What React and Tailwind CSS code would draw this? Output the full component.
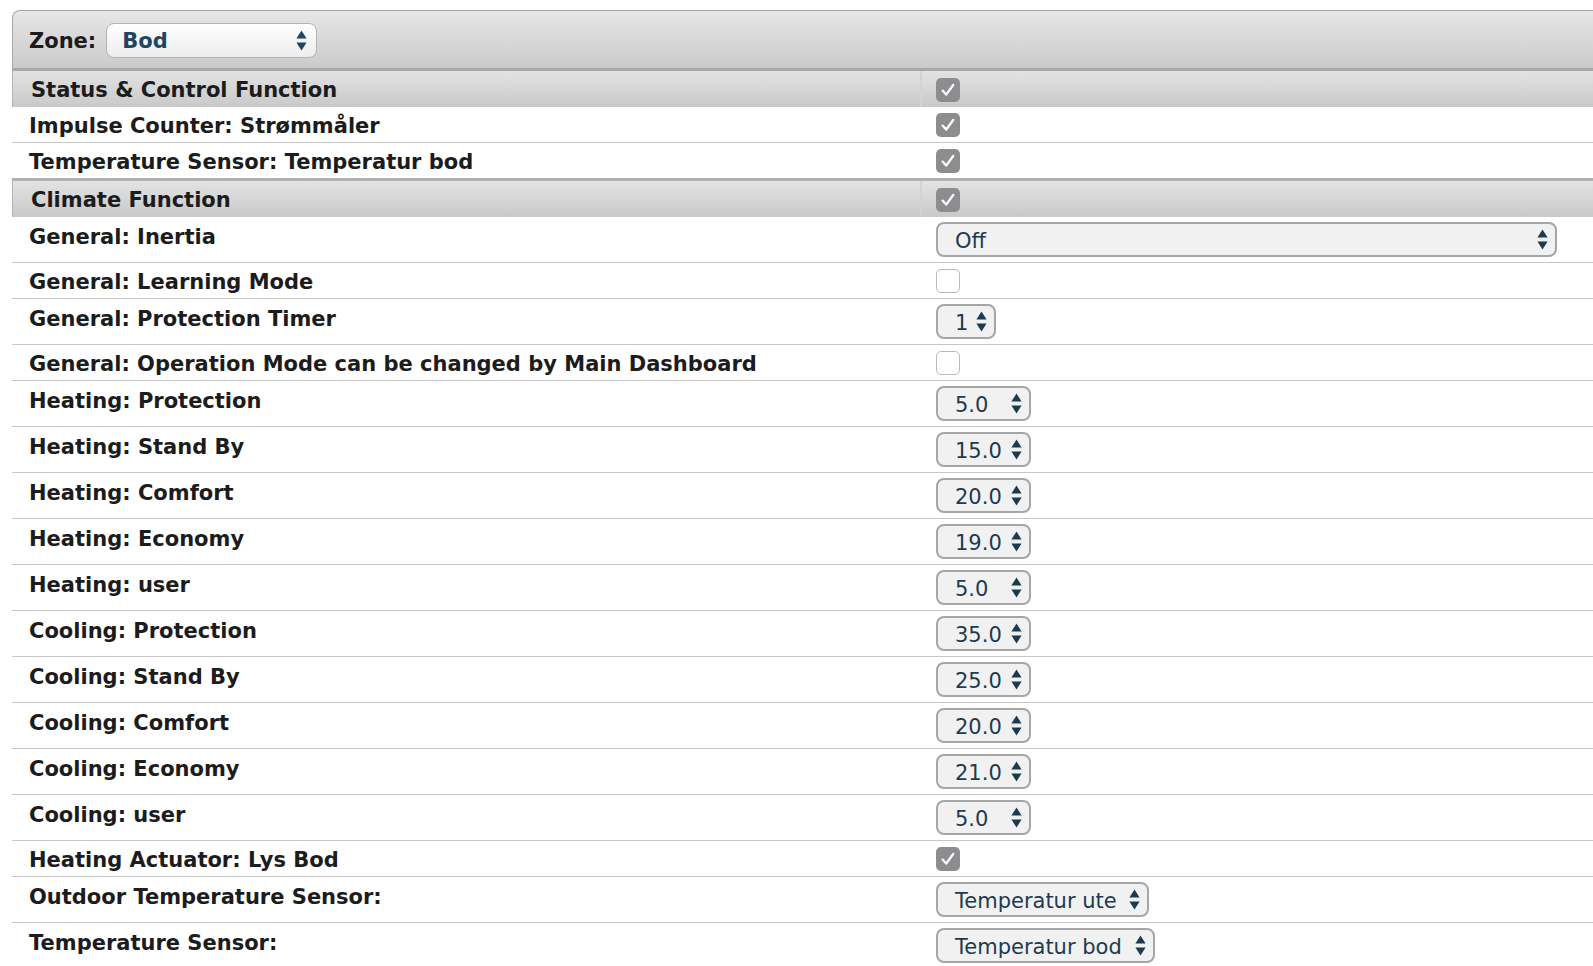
import React from "react";

const NAVY = "#1d3b50";

function Arrows({ color = NAVY }) {
  return (
    <svg width="11" height="21" viewBox="0 0 11 21" className="shrink-0">
      <path d="M5.5 0.5 L10.6 8.5 L0.4 8.5 Z" fill={color} />
      <path d="M0.4 12.5 L10.6 12.5 L5.5 20.5 Z" fill={color} />
    </svg>
  );
}

function Check({ checked }) {
  if (checked) {
    return (
      <div className="flex h-[24px] w-[24px] items-center justify-center rounded-[5px] bg-[#8d8d8f]">
        <svg width="18" height="18" viewBox="0 0 18 18">
          <path d="M3.6 9.6 L7.2 13.6 L14.2 4" fill="none" stroke="white" strokeWidth="2.3" strokeLinecap="round" strokeLinejoin="round" />
        </svg>
      </div>
    );
  }
  return <div className="h-[24px] w-[24px] rounded-[5px] border-[1.5px] border-[#b9b9b9] bg-white" />;
}

function Select({ value, w }) {
  return (
    <div className={`flex h-[35px] items-center justify-between rounded-[8px] border-2 border-[#a6a6a6] bg-[#f1f1f1] pl-[17px] pr-[7px] font-normal text-[#1d3b50] ${w}`}>
      <span className="pt-[3px] leading-none">{value}</span>
      <Arrows />
    </div>
  );
}

const rows = [
  { type: "header", label: "Status & Control Function", checked: true },
  { type: "check", label: "Impulse Counter: Strømmåler", checked: true },
  { type: "check", label: "Temperature Sensor: Temperatur bod", checked: true, last: true },
  { type: "header", label: "Climate Function", checked: true },
  { type: "select", label: "General: Inertia", value: "Off", w: "w-[621px]" },
  { type: "check", label: "General: Learning Mode", checked: false },
  { type: "select", label: "General: Protection Timer", value: "1", w: "w-[60px]" },
  { type: "check", label: "General: Operation Mode can be changed by Main Dashboard", checked: false },
  { type: "select", label: "Heating: Protection", value: "5.0", w: "w-[95px]" },
  { type: "select", label: "Heating: Stand By", value: "15.0", w: "w-[95px]" },
  { type: "select", label: "Heating: Comfort", value: "20.0", w: "w-[95px]" },
  { type: "select", label: "Heating: Economy", value: "19.0", w: "w-[95px]" },
  { type: "select", label: "Heating: user", value: "5.0", w: "w-[95px]" },
  { type: "select", label: "Cooling: Protection", value: "35.0", w: "w-[95px]" },
  { type: "select", label: "Cooling: Stand By", value: "25.0", w: "w-[95px]" },
  { type: "select", label: "Cooling: Comfort", value: "20.0", w: "w-[95px]" },
  { type: "select", label: "Cooling: Economy", value: "21.0", w: "w-[95px]" },
  { type: "select", label: "Cooling: user", value: "5.0", w: "w-[95px]" },
  { type: "check", label: "Heating Actuator: Lys Bod", checked: true },
  { type: "select", label: "Outdoor Temperature Sensor:", value: "Temperatur ute", w: "w-[213px]" },
  { type: "select", label: "Temperature Sensor:", value: "Temperatur bod", w: "w-[219px]" },
];

function Row({ r }) {
  if (r.type === "header") {
    return (
      <div className="flex h-[36px] items-stretch border-l border-[#b4b4b4] bg-gradient-to-b from-[#e3e3e3] to-[#c9c9c9]">
        <div className="flex w-[907px] items-center pl-[18px] pt-[3px]">{r.label}</div>
        <div className="flex flex-1 items-center border-l-2 border-[#d3d3d3] pl-[14px] pt-[1px]">
          <Check checked={r.checked} />
        </div>
      </div>
    );
  }
  if (r.type === "check") {
    return (
      <div className={`flex items-stretch ${r.last ? "h-[35px]" : "h-[36px] border-b border-[#c6c6c6]"}`}>
        <div className="flex w-[908px] items-center pl-[17px] pt-[3px]">{r.label}</div>
        <div className="flex flex-1 items-center pl-[16px] pt-[1px]">
          <Check checked={r.checked} />
        </div>
      </div>
    );
  }
  return (
    <div className="flex h-[46px] items-stretch border-b border-[#c6c6c6]">
      <div className="w-[908px] pl-[17px] pt-[8px]">{r.label}</div>
      <div className="flex flex-1 items-start pl-[16px] pt-[5px]">
        <Select value={r.value} w={r.w} />
      </div>
    </div>
  );
}

export default function App() {
  return (
    <div className="min-h-screen bg-white pl-[12px] pt-[10px] font-['DejaVu_Sans',sans-serif] text-[21px] font-bold leading-[25px] text-[#1c1c1c]">
      <div className="overflow-hidden">
        {/* Zone header */}
        <div className="flex h-[58px] items-center gap-[10px] rounded-tl-[8px] border-l border-t border-[#a9a9a9] bg-gradient-to-b from-[#e6e6e6] to-[#cbcbcb] pl-[16px] pt-[1px]">
          <span className="pt-[3px]">Zone:</span>
          <div className="flex h-[35px] w-[211px] items-center justify-between rounded-[8px] border-[1.5px] border-[#b3b3b3] bg-gradient-to-b from-[#ffffff] to-[#ededed] pl-[15px] pr-[9px] text-[#1d4566]">
            <span className="pt-[3px] leading-none">Bod</span>
            <Arrows color="#1d4566" />
          </div>
        </div>
        <div className="h-[3px] bg-[#a8a8a8]" />
        {rows.map((r, i) => (
          <React.Fragment key={i}>
            <Row r={r} />
            {r.last && <div className="h-[3px] bg-[#b0b0b0]" />}
          </React.Fragment>
        ))}
      </div>
    </div>
  );
}
